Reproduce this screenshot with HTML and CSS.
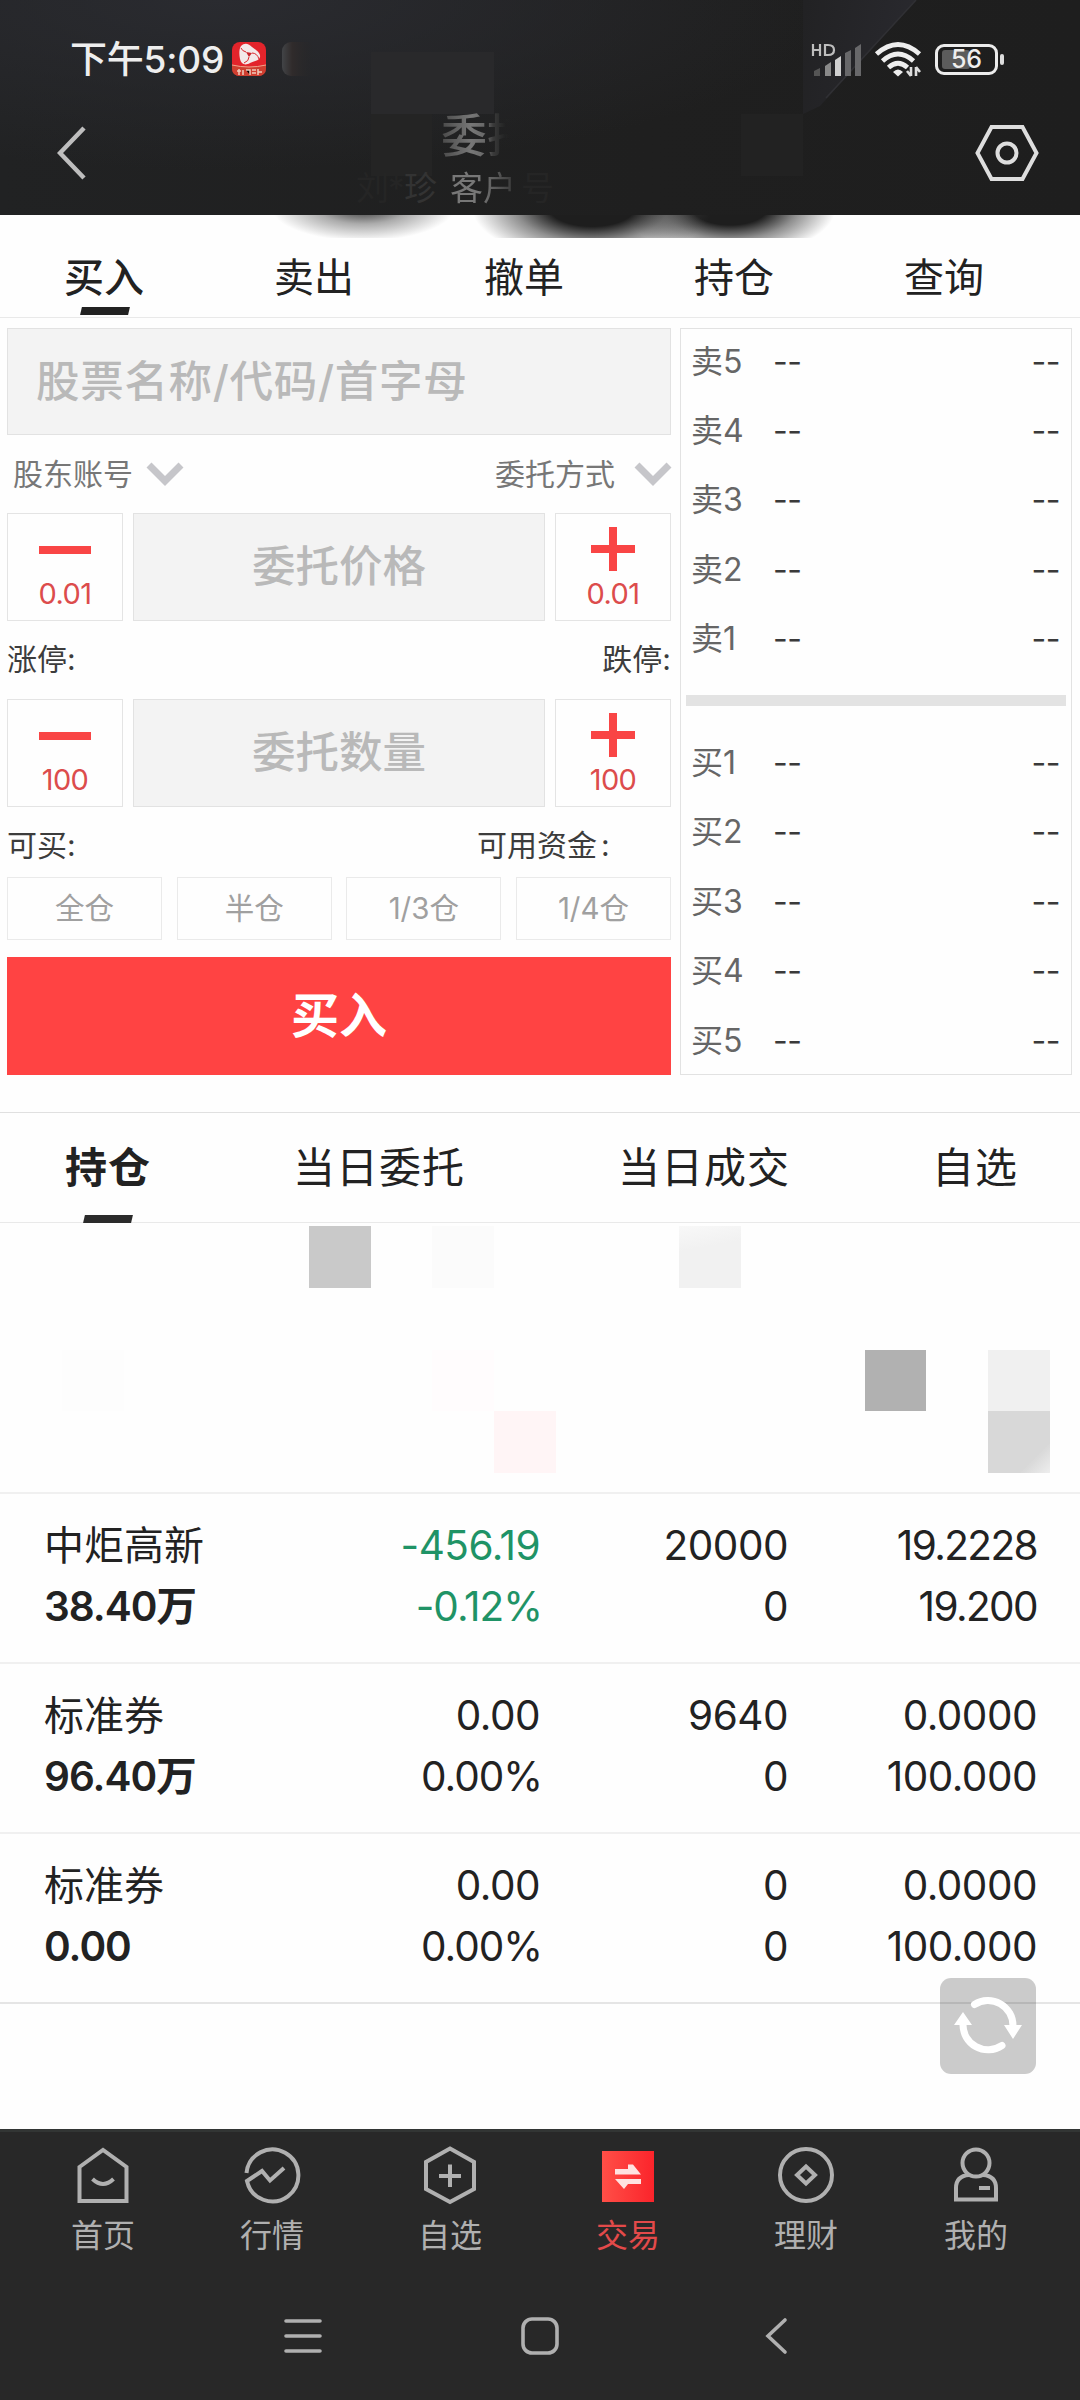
FILE: index.html
```html
<!DOCTYPE html>
<html lang="zh-CN">
<head>
<meta charset="utf-8">
<title>委托交易</title>
<link rel="stylesheet" href="styles.css">
</head>
<body>
<div class="app">
  <header class="header">
    <svg class="header-bg" width="1080" height="215" viewBox="0 0 1080 215" aria-hidden="true">
      <defs>
        <linearGradient id="sheen" x1="803" x2="915" y1="20" y2="40" gradientUnits="userSpaceOnUse">
          <stop offset="0" stop-color="#222224"/><stop offset="1" stop-color="#29292e"/>
        </linearGradient>
        <linearGradient id="ghost" x1="0" x2="1" y1="0" y2="0">
          <stop offset="0" stop-color="#424447"/><stop offset=".3" stop-color="#302b2b"/><stop offset="1" stop-color="#252628" stop-opacity="0"/>
        </linearGradient>
      </defs>
      <path d="M803 0H916L820 106L803 114Z" fill="url(#sheen)"/>
      <path d="M916 0L826 98" stroke="#303034" stroke-width="1.5"/>
      <path d="M371 52H494V114H371Z" fill="#29292b"/>
      <path d="M371 114H432V176H371Z" fill="#242424"/>
      <path d="M741 114H803V176H741Z" fill="#222222"/>
      <rect x="282" y="42" width="34" height="34" rx="9" fill="url(#ghost)"/>
    </svg>
    <div class="status">
      <span class="clock">下午5:09</span>
      <svg class="app-badge" width="34" height="34" viewBox="0 0 34 34">
        <rect width="34" height="34" rx="8" fill="#e3242b"/>
        <path d="M9 4C13 0 17 2 20 5C24 8 29 11 28 15C27 19 22 19 18 21C13 24 9 22 8 17C7 12 7 7 9 4Z" fill="#f3e9e9"/>
        <path d="M14 10L20 11L17 15Z" fill="#c9252b"/>
        <path d="M14 10Q10 9 9 6M20 11Q25 11 27 17M17 15Q17 19 12 21" stroke="#d9252b" fill="none"/>
        <path d="M0 23Q17 27 34 23V26Q34 34 26 34H8Q0 34 0 26Z" fill="#cf3f30"/>
        <path d="M0 23Q17 27 34 23" stroke="#f0a58c" fill="none"/>
        <path d="M5 29H9M7 27V33M11 28V33M14 28H18V33M20 28H24M20 31H24M26 27V33M26 30H30" stroke="#f0cdbc" stroke-width="1.5"/>
      </svg>
      <div class="signals">
        <svg width="52" height="36" viewBox="0 0 52 36">
          <path d="M2 3V15M9 3V15M2 9H9M14 4H17Q23 4 23 9Q23 14 17 14H14Z" stroke="#bdbdbd" stroke-width="2.2" fill="none"/>
          <path d="M3 30L9 27V35H3Z" fill="#555"/><path d="M14 25L20 21V35H14Z" fill="#898989"/><path d="M24 19L30 15V35H24Z" fill="#d0d0d0"/>
          <path d="M34 12L40 9V35H34ZM44 7L50 3V35H44Z" fill="#68686a"/>
        </svg>
        <svg class="wifi" width="48" height="36" viewBox="0 0 48 36">
          <g fill="none" stroke="#eeeeee" stroke-width="4.800">
            <path d="M2.500 13Q24 -6 45.500 13"/><path d="M8.500 20Q24 6 39.500 20"/><path d="M14.500 26.500Q24 18 33.500 26.500"/>
          </g>
          <path d="M19 31Q24 26 29 31L24 35.500Z" fill="#eee"/>
          <path d="M37 26V35M33 30L37 35M42 35V26M46 31L42 26" stroke="#ddd" stroke-width="2.600" fill="none"/>
        </svg>
        <div class="battery"><i></i><span>56</span></div>
      </div>
    </div>
    <svg class="back" width="30" height="56" viewBox="0 0 30 56"><path d="M27 3L3 28L27 53" fill="none" stroke="#bebebe" stroke-width="4.500"/></svg>
    <div class="title">
      <div class="title-main">委托</div>
      <div class="title-sub"><span class="faint">刘*</span><span class="dim">珍</span><span class="who">客户</span><span class="faint">号</span></div>
    </div>
    <svg class="settings" width="66" height="58" viewBox="0 0 66 58"><path d="M17.500 3H48.500L62.500 29L48.500 55H17.500L3.500 29Z" fill="none" stroke="#dedede" stroke-width="4"/><circle cx="33" cy="29" r="9.500" fill="none" stroke="#dedede" stroke-width="4"/></svg>
  </header>
  <div class="smudge"></div>

  <nav class="tabs">
    <span class="tab on">买入</span><span class="tab">卖出</span><span class="tab">撤单</span><span class="tab">持仓</span><span class="tab">查询</span>
  </nav>

  <section class="trade">
    <div class="form">
      <div class="search">股票名称/代码/首字母</div>
      <div class="line picks">
        <span>股东账号<svg width="38" height="26" viewBox="0 0 38 26"><path d="M3 4L19 20L35 4" fill="none" stroke="#c6c6ca" stroke-width="7"/></svg></span>
        <span class="wide">委托方式<svg width="38" height="26" viewBox="0 0 38 26"><path d="M3 4L19 20L35 4" fill="none" stroke="#c6c6ca" stroke-width="7"/></svg></span>
      </div>
      <div class="stepper">
        <div class="step"><svg width="52" height="44" viewBox="0 0 52 44"><path d="M0 23H52" stroke="#f94545" stroke-width="8"/></svg><b>0.01</b></div>
        <div class="field">委托价格</div>
        <div class="step"><svg width="44" height="44" viewBox="0 0 44 44"><path d="M0 22H44M22 0V44" stroke="#f94545" stroke-width="8"/></svg><b>0.01</b></div>
      </div>
      <div class="line"><span>涨停:</span><span>跌停:</span></div>
      <div class="stepper">
        <div class="step"><svg width="52" height="44" viewBox="0 0 52 44"><path d="M0 23H52" stroke="#f94545" stroke-width="8"/></svg><b>100</b></div>
        <div class="field">委托数量</div>
        <div class="step"><svg width="44" height="44" viewBox="0 0 44 44"><path d="M0 22H44M22 0V44" stroke="#f94545" stroke-width="8"/></svg><b>100</b></div>
      </div>
      <div class="line funds"><span>可买:</span><span class="cash">可用资金<i>:</i></span></div>
      <div class="ratios"><span>全仓</span><span>半仓</span><span>1/3仓</span><span>1/4仓</span></div>
      <div class="buy">买入</div>
    </div>
    <div class="book">
      <div class="sell">
        <div class="quote"><span>卖5</span><i>--</i><i>--</i></div>
        <div class="quote"><span>卖4</span><i>--</i><i>--</i></div>
        <div class="quote"><span>卖3</span><i>--</i><i>--</i></div>
        <div class="quote"><span>卖2</span><i>--</i><i>--</i></div>
        <div class="quote"><span>卖1</span><i>--</i><i>--</i></div>
      </div>
      <div class="bar"></div>
      <div class="bids">
        <div class="quote"><span>买1</span><i>--</i><i>--</i></div>
        <div class="quote"><span>买2</span><i>--</i><i>--</i></div>
        <div class="quote"><span>买3</span><i>--</i><i>--</i></div>
        <div class="quote"><span>买4</span><i>--</i><i>--</i></div>
        <div class="quote"><span>买5</span><i>--</i><i>--</i></div>
      </div>
    </div>
  </section>

  <nav class="subtabs"><span class="on">持仓</span><span>当日委托</span><span>当日成交</span><span>自选</span></nav>

  <div class="mosaic">
    <i class="m1"></i><i class="m2"></i><i class="m3"></i><i class="m4"></i><i class="m5"></i><i class="m6"></i><i class="m7"></i><i class="m8"></i><i class="m9"></i>
  </div>

  <section class="holdings">
    <div class="row"><span class="name">中炬高新</span><span class="down">-456.19</span><span>20000</span><span class="tight">19.2228</span>
      <b>38.40万</b><span class="down pct">-0.12%</span><span>0</span><span class="tight">19.200</span></div>
    <div class="row"><span class="name">标准券</span><span>0.00</span><span>9640</span><span>0.0000</span>
      <b>96.40万</b><span class="pct">0.00%</span><span>0</span><span>100.000</span></div>
    <div class="row"><span class="name">标准券</span><span>0.00</span><span>0</span><span>0.0000</span>
      <b>0.00</b><span class="pct">0.00%</span><span>0</span><span>100.000</span></div>
  </section>

  <div class="refresh">
    <svg width="96" height="96" viewBox="0 0 96 96"><g fill="none" stroke="#fff" stroke-width="7" stroke-linecap="round"><path d="M34.500 26.500A25 25 0 0 1 73 48"/><path d="M23 46A25 25 0 0 0 62 67.500"/></g><path d="M64 47H82L73 61ZM14 47H32L23 34Z" fill="#fff"/></svg>
  </div>

  <footer class="footer">
    <nav class="dock">
      <span><svg width="60" height="60" viewBox="0 0 60 60"><path d="M6.500 22L30 5L53.500 22V56H6.500Z" /><path d="M19.500 34Q30 44 40.500 34"/></svg>首页</span>
      <span><svg width="60" height="60" viewBox="0 0 60 60"><path d="M4.500 28A26 26 0 1 1 5 36L20 26L28 35.500L42 23"/></svg>行情</span>
      <span><svg width="60" height="60" viewBox="0 0 60 60"><path d="M30 3.500L54 17V44L30 57L6 44V17ZM30 19.500V42M19 31H41"/></svg>自选</span>
      <span class="active"><svg width="60" height="60" viewBox="0 0 60 60"><defs><linearGradient id="red"><stop offset="0" stop-color="#ff4f47"/><stop offset="1" stop-color="#fb242b"/></linearGradient></defs><rect x="4" y="6" width="52" height="51" fill="url(#red)" stroke="none"/><path d="M17 24H30V19.500H35L43 29.500H17ZM43 39H30L26 44L17 34H43Z" fill="#ffe2e0" stroke="none"/></svg>交易</span>
      <span><svg width="60" height="60" viewBox="0 0 60 60"><circle cx="30" cy="30" r="26"/><path d="M30 21.500L39 30L30 38.500L21 30Z"/></svg>理财</span>
      <span><svg width="60" height="60" viewBox="0 0 60 60"><circle cx="30" cy="18" r="13.500"/><path d="M23 30Q10 31 10 43V54.500H50V43Q50 31 37 30M33 43H44"/></svg>我的</span>
    </nav>
    <div class="sysnav">
      <svg width="38" height="38" viewBox="0 0 38 38"><path d="M2 4H36M2 19H36M2 34H36"/></svg>
      <svg width="38" height="38" viewBox="0 0 38 38"><rect x="2" y="2" width="34" height="34" rx="9"/></svg>
      <svg width="38" height="38" viewBox="0 0 38 38"><path d="M27 3L10 19L27 35"/></svg>
    </div>
  </footer>
</div>
</body>
</html>
```

FILE: styles.css
```css
* { box-sizing: border-box; }
body {
  margin: 0;
  background: #fefefe;
  color: #222;
  font-family: Inter, "Noto Sans CJK SC", sans-serif;
}
i { font-style: normal; }
svg { display: block; flex: none; }
.app {
  position: relative;
  display: flex;
  flex-direction: column;
  width: 1080px;
  height: 2400px;
  overflow: hidden;
}

/* header */
.header {
  position: relative;
  flex: none;
  height: 215px;
  background:
    radial-gradient(ellipse 620px 170px at 220px 0, #2a2b30, rgba(42, 43, 48, 0)),
    linear-gradient(90deg, #212223, #1f1f1f 60%, #1e1e1e);
}
.header-bg { position: absolute; left: 0; top: 0; }
.status {
  position: relative;
  display: flex;
  align-items: center;
  height: 118px;
  padding: 0 82px 0 70px;
}
.clock { width: 162px; padding-top: 2px; font-size: 37px; font-weight: 500; line-height: 44px; letter-spacing: -.2px; color: #eee; white-space: nowrap; }
.signals { display: flex; align-items: center; margin-left: auto; }
.wifi { margin-left: 11px; }
.battery {
  position: relative;
  width: 63px;
  height: 31px;
  margin-left: 13px;
  border: 3px solid #ececec;
  border-radius: 9px;
  color: #eee;
  font-size: 25px;
  font-weight: 500;
  line-height: 25px;
  text-align: center;
}
.battery i { position: absolute; left: 4px; top: 3px; width: 28px; height: 19px; border-radius: 3px; background: #5c5c5c; }
.battery span { position: relative; }
.battery::after { content: ""; position: absolute; left: 62px; top: 7px; width: 4px; height: 11px; border-radius: 2px; background: #ddd; }
.back { position: absolute; left: 57px; top: 125px; }
.settings { position: absolute; left: 974px; top: 124px; }
.title { position: absolute; left: 356px; top: 105px; }
.title-main {
  width: 150px;
  margin-left: 85px;
  font-size: 46px;
  font-weight: 500;
  line-height: 60px;
  color: transparent;
  background: linear-gradient(90deg, #4c4c4c 2px, #777 30px, #666 46px, #3a3a3a 52px, #262727 62px, rgba(32, 32, 32, 0) 68px);
  -webkit-background-clip: text;
  background-clip: text;
}
.title-sub { display: flex; font-size: 33px; line-height: 47px; color: #666; }
.title-sub span { white-space: nowrap; }
.title-sub .faint { min-width: 48px; color: #252525; letter-spacing: -1px; }
.title-sub .dim { width: 46px; color: #333; }
.title-sub .who { width: 71px; color: transparent; background: linear-gradient(90deg, #777 30px, #343434 66px); -webkit-background-clip: text; background-clip: text; }
.smudge {
  flex: none;
  height: 23px;
  background:
    radial-gradient(ellipse 92px 34px at 363px -8px, #444 10%, rgba(90, 90, 90, .5) 50%, rgba(200, 200, 200, 0)),
    radial-gradient(ellipse 120px 54px at 592px -8px, #1e1e1e 36%, rgba(70, 70, 70, .6) 64%, rgba(200, 200, 200, 0)),
    radial-gradient(ellipse 106px 50px at 730px -8px, #1e1e1e 36%, rgba(70, 70, 70, .6) 64%, rgba(200, 200, 200, 0));
}

/* order tabs */
.tabs {
  display: grid;
  grid-template-columns: repeat(5, 210px);
  flex: none;
  height: 80px;
  border-bottom: 1px solid #e9e9e9;
  font-size: 40px;
  line-height: 80px;
  text-align: center;
}
.tab { position: relative; left: -1px; }
.tab.on { font-weight: 500; }
.tab.on::after { content: ""; position: absolute; left: 82px; top: 69px; width: 48px; height: 8px; background: #222; transform: skewX(-13deg); }

/* order form */
.trade { display: flex; gap: 9px; flex: none; height: 794px; padding: 10px 8px 37px 7px; }
.form { width: 664px; }
.search {
  height: 107px;
  padding-left: 28px;
  border: 1px solid #e2e2e2;
  background: #f3f3f3;
  color: #b9b9b9;
  font-size: 43.500px;
  font-weight: 500;
  line-height: 104px;
  letter-spacing: .7px;
}
.line {
  display: flex;
  justify-content: space-between;
  height: 78px;
  font-size: 30px;
  line-height: 77px;
  color: #3c3c3c;
}
.picks { padding-left: 6px; line-height: 75px; color: #777; }
.picks span { display: flex; align-items: center; gap: 13px; }
.picks .wide { gap: 19px; margin-right: -1px; }
.funds { height: 70px; padding-top: 7px; line-height: 62px; }
.cash { width: 194px; }
.cash i { margin-left: 4px; }
.stepper { display: grid; grid-template-columns: 116px 412px 116px; gap: 10px; height: 108px; }
.step {
  display: flex;
  flex-direction: column;
  align-items: center;
  padding-top: 13px;
  border: 1px solid #e4e4e4;
  color: #dc4c4c;
}
.step b { margin-top: 6px; font-size: 29px; font-weight: 400; line-height: 34px; letter-spacing: -.6px; }
.field {
  border: 1px solid #e2e2e2;
  background: #f3f3f3;
  color: #b9b9b9;
  font-size: 43.500px;
  font-weight: 500;
  line-height: 105px;
  text-align: center;
}
.ratios { display: grid; grid-template-columns: repeat(4, 155px); justify-content: space-between; height: 63px; }
.ratios span { border: 1px solid #eaeaea; color: #a0a0a0; font-size: 29.500px; line-height: 61px; text-align: center; }
.buy { height: 118px; margin-top: 17px; background: #ff4343; color: #fff; font-size: 48px; font-weight: 700; line-height: 117px; text-align: center; }

/* order book */
.book { width: 393px; border: 1px solid #e2e2e2; }
.sell { margin-top: -2px; }
.bids { padding-top: 22px; }
.quote {
  display: grid;
  grid-template-columns: 82px 1fr auto;
  height: 69.200px;
  padding: 0 11px 0 10px;
  font-size: 32px;
  line-height: 69px;
  color: #666;
}
.bids .quote { height: 69.500px; }
.quote i { color: #3a3a3a; letter-spacing: -.5px; }
.bar { height: 11px; margin: 22px 5px 0; background: #e3e3e3; }

/* lower tabs */
.subtabs {
  display: grid;
  grid-template-columns: 228px 325px 314px auto;
  flex: none;
  height: 111px;
  border-top: 1px solid #e0e0e0;
  border-bottom: 1px solid #e9e9e9;
  padding-left: 65px;
  font-size: 42px;
  line-height: 109px;
  letter-spacing: 1px;
}
.subtabs .on { position: relative; font-weight: 700; }
.subtabs .on::after { content: ""; position: absolute; left: 19px; top: 102px; width: 48px; height: 8px; background: #2b2b2b; transform: skewX(-13deg); }

.mosaic {
  display: grid;
  grid-template: repeat(4, 61.750px) / repeat(17, 61.750px);
  flex: none;
  height: 269px;
  padding-top: 3px;
}
.m1 { grid-area: 1 / 6; background: #c9c9c9; }
.m2 { grid-area: 1 / 8; background: #fbfbfb; }
.m3 { grid-area: 1 / 12; background: linear-gradient(170deg, #f8f8f8, #f1f1f1 35%); }
.m4 { grid-area: 3 / 2; background: #fdfdfd; }
.m5 { grid-area: 3 / 8; background: #fffcfd; }
.m6 { grid-area: 3 / 15; background: #b1b1b1; }
.m7 { grid-area: 3 / 17; background: #f0f0f0; }
.m8 { grid-area: 4 / 9; background: #fff5f6; }
.m9 { grid-area: 4 / 17; background: linear-gradient(315deg, #eeeeee, #d8d8d8 25%); }

/* holdings */
.holdings { flex: none; border-bottom: 2px solid #e5e5e5; }
.row {
  display: grid;
  grid-template-columns: 200px 296px 248px 249px;
  grid-template-rows: 61px 61px;
  height: 170px;
  padding: 21px 43px 0 44px;
  border-top: 2px solid #f0f0f0;
  font-size: 40.500px;
  line-height: 61px;
  letter-spacing: -.5px;
  text-align: right;
}
.row .name, .row b { text-align: left; }
.row .name { font-size: 40px; letter-spacing: 0; }
.row b { font-weight: 600; letter-spacing: -1px; }
.row .pct { margin-right: -2px; letter-spacing: -1px; }
.row .tight { letter-spacing: -1.600px; }
.down { color: #1f9366; }

.refresh { position: absolute; left: 940px; top: 1978px; width: 96px; height: 96px; border-radius: 11px; background: rgba(0, 0, 0, .2); }

/* bottom bars */
.footer { flex: none; height: 271px; margin-top: auto; background: #282828; border-top: 3px solid #323534; }
.dock { display: grid; grid-template-columns: 160px 178px 178px 178px 178px 162px; height: 145px; padding: 13px 0 0 23px; font-size: 32px; line-height: 61px; color: #b0b0b0; }
.dock span { display: flex; flex-direction: column; align-items: center; }
.dock svg { fill: none; stroke: #b0b0b0; stroke-width: 4; }
.dock .active { color: #e34a4a; }
.sysnav { display: grid; grid-template-columns: 237px 237px 237px; justify-items: center; padding: 40px 0 0 184px; }
.sysnav svg { fill: none; stroke: #b0b0b0; stroke-width: 3.600; stroke-linecap: round; }
```
